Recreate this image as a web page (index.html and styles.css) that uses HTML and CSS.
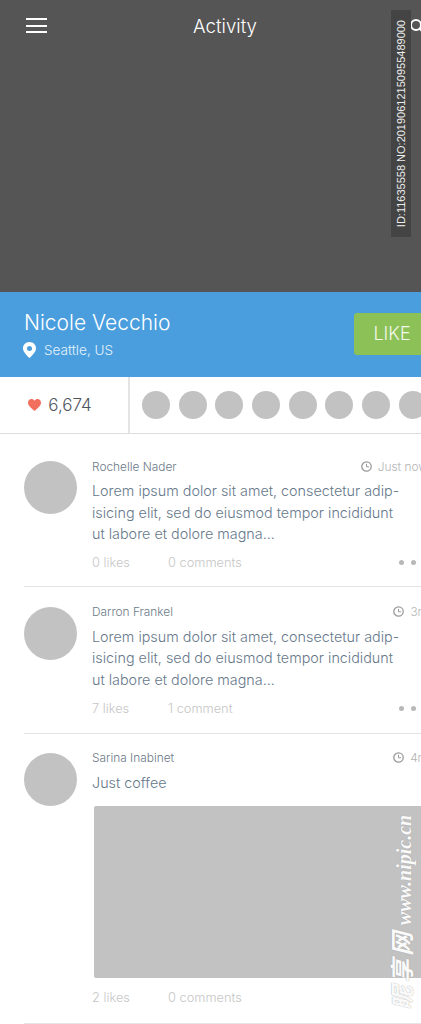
FILE: index.html
```html
<!DOCTYPE html>
<html lang="en">
<head>
  <meta charset="UTF-8">
  <meta name="viewport" content="width=device-width, initial-scale=1.0">
  <title>Activity</title>
  <link rel="stylesheet" href="styles.css">
</head>
<body>
  <div class="page">

    <!-- Header photo area -->
    <header class="hero">
      <div class="menu-icon"><span></span><span></span><span></span></div>
      <h1>Activity</h1>
      <svg class="search-icon" width="14" height="16" viewBox="0 0 14 16">
        <circle cx="7" cy="7" r="5" fill="none" stroke="#fff" stroke-width="2"/>
        <path d="M10.5 10.5L14 14" stroke="#fff" stroke-width="2"/>
      </svg>
      <div class="stamp"><span>ID:11635558 NO:20190612150955489000</span></div>
    </header>

    <!-- Profile bar -->
    <section class="profile">
      <div>
        <h2>Nicole Vecchio</h2>
        <div class="location">
          <svg width="13" height="16" viewBox="0 0 13 16">
            <path fill="#fff" fill-rule="evenodd" d="M6.5 0C2.9 0 0 2.8 0 6.3 0 10.3 4.4 14 6.5 16 8.6 14 13 10.3 13 6.3 13 2.8 10.100 0 6.500 0ZM6.500 3.900A2.500 2.500 0 1 1 6.500 8.900 2.500 2.500 0 0 1 6.500 3.900Z"/>
          </svg>
          <span>Seattle, US</span>
        </div>
      </div>
      <div class="like-btn">LIKE</div>
    </section>

    <!-- Likes count and faces -->
    <section class="stats">
      <div class="count">
        <svg width="13" height="12" viewBox="0 0 13 12">
          <path fill="#f26f5e" d="M6.500 12C3.500 9.500 0 7 0 3.600 0 1.500 1.500 0 3.400 0 4.700 0 5.800.6 6.500 1.800 7.200.6 8.300 0 9.600 0 11.500 0 13 1.500 13 3.600 13 7 9.500 9.500 6.500 12Z"/>
        </svg>
        <span>6,674</span>
      </div>
      <div class="faces">
        <i></i><i></i><i></i><i></i><i></i><i></i><i></i><i></i>
      </div>
    </section>

    <!-- Feed -->
    <main class="feed">
      <article class="post">
        <div class="avatar"></div>
        <div class="post-body">
          <div class="post-top">
            <span class="name">Rochelle Nader</span>
            <span class="time">
              <svg width="11" height="11" viewBox="0 0 11 11"><circle cx="5.500" cy="5.500" r="4.700" fill="none" stroke="#9a9a9a" stroke-width="1.300"/><path d="M5.500 2.800V5.800H8" fill="none" stroke="#9a9a9a"/></svg>
              Just now
            </span>
          </div>
          <p>Lorem ipsum dolor sit amet, consectetur adip-<br>isicing elit, sed do eiusmod tempor incididunt<br>ut labore et dolore magna...</p>
          <div class="post-meta">
            <span class="likes">0 likes</span>
            <span>0 comments</span>
            <span class="dots"><i></i><i></i><i></i></span>
          </div>
        </div>
      </article>

      <article class="post">
        <div class="avatar"></div>
        <div class="post-body">
          <div class="post-top">
            <span class="name">Darron Frankel</span>
            <span class="time">
              <svg width="11" height="11" viewBox="0 0 11 11"><circle cx="5.500" cy="5.500" r="4.700" fill="none" stroke="#9a9a9a" stroke-width="1.300"/><path d="M5.500 2.800V5.800H8" fill="none" stroke="#9a9a9a"/></svg>
              3m
            </span>
          </div>
          <p>Lorem ipsum dolor sit amet, consectetur adip-<br>isicing elit, sed do eiusmod tempor incididunt<br>ut labore et dolore magna...</p>
          <div class="post-meta">
            <span class="likes">7 likes</span>
            <span>1 comment</span>
            <span class="dots"><i></i><i></i><i></i></span>
          </div>
        </div>
      </article>

      <article class="post">
        <div class="avatar"></div>
        <div class="post-body">
          <div class="post-top">
            <span class="name">Sarina Inabinet</span>
            <span class="time">
              <svg width="11" height="11" viewBox="0 0 11 11"><circle cx="5.500" cy="5.500" r="4.700" fill="none" stroke="#9a9a9a" stroke-width="1.300"/><path d="M5.500 2.800V5.800H8" fill="none" stroke="#9a9a9a"/></svg>
              4m
            </span>
          </div>
          <p class="short">Just coffee</p>
          <div class="photo"></div>
          <div class="post-meta">
            <span class="likes">2 likes</span>
            <span>0 comments</span>
          </div>
        </div>
      </article>
    </main>

    <div class="watermark"><span class="wm-cn">昵享网</span> <span class="wm-url">www.nipic.cn</span></div>
  </div>
</body>
</html>
```

FILE: styles.css
```css
/* Global Styles */
body {
  margin: 0;
  font-family: Inter, "Liberation Sans", sans-serif;
  font-weight: 300;
  background-color: #fff;
}

.page {
  position: relative;
  width: 421px;
  height: 1024px;
  overflow: hidden;
}

/* Header */
.hero {
  position: relative;
  height: 292px;
  background-color: #555;
}

.hero h1 {
  margin: 0;
  padding-top: 14px;
  text-align: center;
  font-size: 18.700px;
  line-height: 26px;
  font-weight: 300;
  color: #fff;
  width: 450px;
}

.menu-icon {
  position: absolute;
  left: 26px;
  top: 18px;
  width: 21px;
  display: flex;
  flex-direction: column;
  gap: 4.500px;
}

.menu-icon span {
  height: 2px;
  background-color: #fff;
}

.search-icon {
  position: absolute;
  left: 409px;
  top: 18px;
}

.stamp {
  position: absolute;
  left: 391px;
  top: 10px;
  width: 20px;
  height: 227px;
  background-color: #444;
  display: flex;
  align-items: center;
  justify-content: center;
}

.stamp span {
  writing-mode: vertical-rl;
  transform: rotate(180deg);
  font-family: "Liberation Sans", sans-serif;
  font-weight: 400;
  font-size: 11px;
  color: #eee;
  white-space: nowrap;
}

/* Profile bar */
.profile {
  display: flex;
  justify-content: space-between;
  align-items: center;
  height: 85px;
  padding-left: 24px;
  width: 430px;
  box-sizing: border-box;
  background-color: #4a9edd;
  color: #fff;
}

.profile h2 {
  margin: -3px 0 0;
  font-size: 21px;
  line-height: 28px;
  font-weight: 300;
}

.location {
  display: flex;
  align-items: center;
  gap: 8px;
  margin: 5px 0 0 -1px;
  font-size: 13.600px;
  color: #e6f2fb;
}

.like-btn {
  width: 76px;
  height: 42px;
  line-height: 42px;
  text-align: center;
  font-size: 18px;
  border-radius: 3px;
  background-color: #8bc157;
  color: #f2f8ea;
  margin-top: -1px;
}

/* Stats */
.stats {
  display: flex;
  height: 56px;
  border-bottom: 1px solid #ddd;
}

.count {
  flex: 0 0 130px;
  box-sizing: border-box;
  display: flex;
  align-items: center;
  justify-content: center;
  gap: 7px;
  padding-right: 8px;
  border-right: 2px solid #e4e4e4;
  font-size: 17px;
  color: #4f5560;
}

.faces {
  display: flex;
  align-items: center;
  gap: 8.700px;
  padding-left: 12px;
}

.faces i {
  flex: none;
  width: 28px;
  height: 28px;
  border-radius: 50%;
  background-color: #c2c2c2;
}

/* Feed */
.feed {
  width: 428px;
  padding-left: 24px;
  box-sizing: border-box;
}

.post {
  display: flex;
  gap: 15px;
  padding: 20px 0 16.500px;
  border-bottom: 1px solid #e4e4e4;
}

.post:first-child {
  padding: 27px 0 15px;
}

.post:last-child {
  padding: 19px 0 17px;
}

.avatar {
  flex: none;
  width: 53px;
  height: 53px;
  border-radius: 50%;
  background-color: #c2c2c2;
}

.post-body {
  flex: 1;
  min-width: 0;
}

.post-top {
  display: flex;
  justify-content: space-between;
  align-items: center;
  height: 10px;
  font-size: 11.900px;
}

.name {
  color: #6c7a88;
}

.time {
  display: flex;
  align-items: center;
  gap: 6px;
  color: #b4b4b4;
}

.post p {
  margin: 9px 0 0;
  font-size: 14.350px;
  line-height: 21.500px;
  color: #66788a;
  white-space: nowrap;
}

.post-meta {
  display: flex;
  align-items: center;
  height: 16px;
  margin-top: 10px;
  font-size: 12.800px;
  color: #c6c6c6;
}

.likes {
  width: 76px;
}

.dots {
  margin-left: auto;
  display: flex;
  gap: 7px;
}

.dots i {
  width: 5px;
  height: 5px;
  border-radius: 50%;
  background-color: #b8b8b8;
}

.photo {
  height: 172px;
  margin: 12.500px 0 0 2px;
  border-radius: 2px;
  background-color: #c2c2c2;
}

.photo + .post-meta {
  margin-top: 12px;
}

/* Watermark */
.watermark {
  position: absolute;
  left: 388px;
  top: 1010px;
  transform-origin: left top;
  transform: rotate(-90deg);
  white-space: nowrap;
  line-height: 26px;
  font-style: italic;
  font-weight: 700;
  color: #fafafa;
  text-shadow: 0 0 1px #999;
}

.wm-cn {
  font-family: "Noto Sans CJK SC", sans-serif;
  font-size: 24px;
  letter-spacing: 3px;
}

.wm-url {
  font-family: "Liberation Serif", serif;
  font-size: 20px;
}
```
